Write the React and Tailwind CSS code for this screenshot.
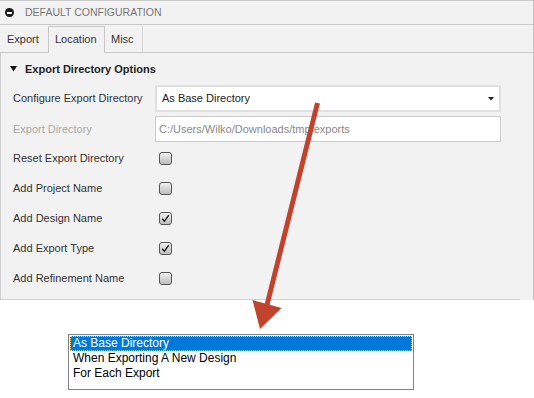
import React from "react";

function Checkbox({ checked }) {
  return (
    <div className="w-[13px] h-[13px] rounded-[3px] border border-[#555] bg-linear-to-b from-[#f2f2f2] to-[#bdbdbd] flex items-center justify-center">
      {checked && (
        <svg width="11" height="11" viewBox="0 0 11 11">
          <path d="M2.2 5.8 L4.4 8.3 L8.8 2.2" fill="none" stroke="#111" strokeWidth="1.3" />
        </svg>
      )}
    </div>
  );
}

const rows = [
  ["Reset Export Directory", false],
  ["Add Project Name", false],
  ["Add Design Name", true],
  ["Add Export Type", true],
  ["Add Refinement Name", false],
];

export default function App() {
  return (
    <div className="relative w-[534px] h-[398px] bg-white font-['Liberation_Sans',Arial,sans-serif] overflow-hidden">
      {/* Panel */}
      <div className="w-[534px] h-[300px] bg-[#f2f2f2] border-r border-[#c4c4c4] flex flex-col">
        {/* Header */}
        <div className="h-[25px] border-t border-b border-[#cacaca] flex items-center pl-[5px] gap-[11px]">
          <div className="w-[9px] h-[9px] rounded-full bg-[#1a1a1a] flex items-center justify-center">
            <div className="w-[5px] h-[2px] bg-white" />
          </div>
          <span className="text-[10.5px] text-[#777]">DEFAULT CONFIGURATION</span>
        </div>
        {/* Tabs */}
        <div className="h-[28px] pt-[2px] border-b border-[#c8c8c8] flex items-end text-[11px] text-[#333]">
          <div className="w-[48px] h-[26px] flex items-center pl-[7px]">Export</div>
          <div className="w-[57px] h-[27px] mb-[-1px] border-l border-t border-r border-[#c8c8c8] bg-[#f2f2f2] flex items-center pl-[6px] pb-[1px]">Location</div>
          <div className="w-[38px] h-[26px] border-r border-[#d8d8d8] flex items-center pl-[6px]">Misc</div>
        </div>
        {/* Content */}
        <div className="flex flex-1">
          <div className="w-[520px] border-l border-b border-[#cfcfcf] flex flex-col">
            <div className="h-[32px] flex items-center pl-[9px] gap-[8px]">
              <svg width="7" height="6" viewBox="0 0 7 6">
                <path d="M0 0 L7 0 L3.5 5.5 Z" fill="#111" />
              </svg>
              <span className="text-[11px] font-bold text-[#222]">Export Directory Options</span>
            </div>
            <div className="h-[27px] flex items-center pl-[12px]">
              <span className="w-[142px] text-[11px] text-[#333]">Configure Export Directory</span>
              <div className="w-[346px] h-[27px] bg-white border-2 border-[#e0e0e0] flex items-center justify-between pl-[5px] pr-[5px]">
                <span className="text-[11px] text-[#222]">As Base Directory</span>
                <svg width="6" height="4" viewBox="0 0 6 4">
                  <path d="M0 0 L6 0 L3 3.5 Z" fill="#222" />
                </svg>
              </div>
            </div>
            <div className="h-[26px] mt-[4px] flex items-center pl-[12px]">
              <span className="w-[142px] text-[11px] text-[#aaa]">Export Directory</span>
              <div className="w-[346px] h-[26px] bg-white border border-[#cccccc] flex items-center pl-[3px]">
                <span className="text-[11px] text-[#8a8a8a]">C:/Users/Wilko/Downloads/tmp/exports</span>
              </div>
            </div>
            <div className="mt-[1px] flex flex-col">
              {rows.map(([label, checked]) => (
                <div key={label} className="h-[30px] flex items-center pl-[12px]">
                  <span className="w-[146px] text-[11px] text-[#333]">{label}</span>
                  <Checkbox checked={checked} />
                </div>
              ))}
            </div>
          </div>
          <div className="flex-1" />
        </div>
      </div>

      {/* Dropdown list */}
      <div className="ml-[68px] mt-[34px] w-[346px] h-[56px] border border-[#828282] bg-white p-px text-[12px] leading-[15px] text-black">
        <div className="h-[15px] bg-[#0078d7] text-white border border-dotted border-[#f3d27a] flex items-center pl-[2px]">
          As Base Directory
        </div>
        <div className="h-[15px] flex items-center pl-[3px]">When Exporting A New Design</div>
        <div className="h-[15px] flex items-center pl-[3px]">For Each Export</div>
      </div>

      {/* Annotation arrow */}
      <svg className="absolute left-0 top-0 pointer-events-none" width="534" height="398" viewBox="0 0 534 398">
        <line x1="317.5" y1="103" x2="267" y2="305" stroke="#c1432e" strokeWidth="5" />
        <polygon points="252.5,300 281.5,308 260,329" fill="#c1432e" />
      </svg>
    </div>
  );
}
